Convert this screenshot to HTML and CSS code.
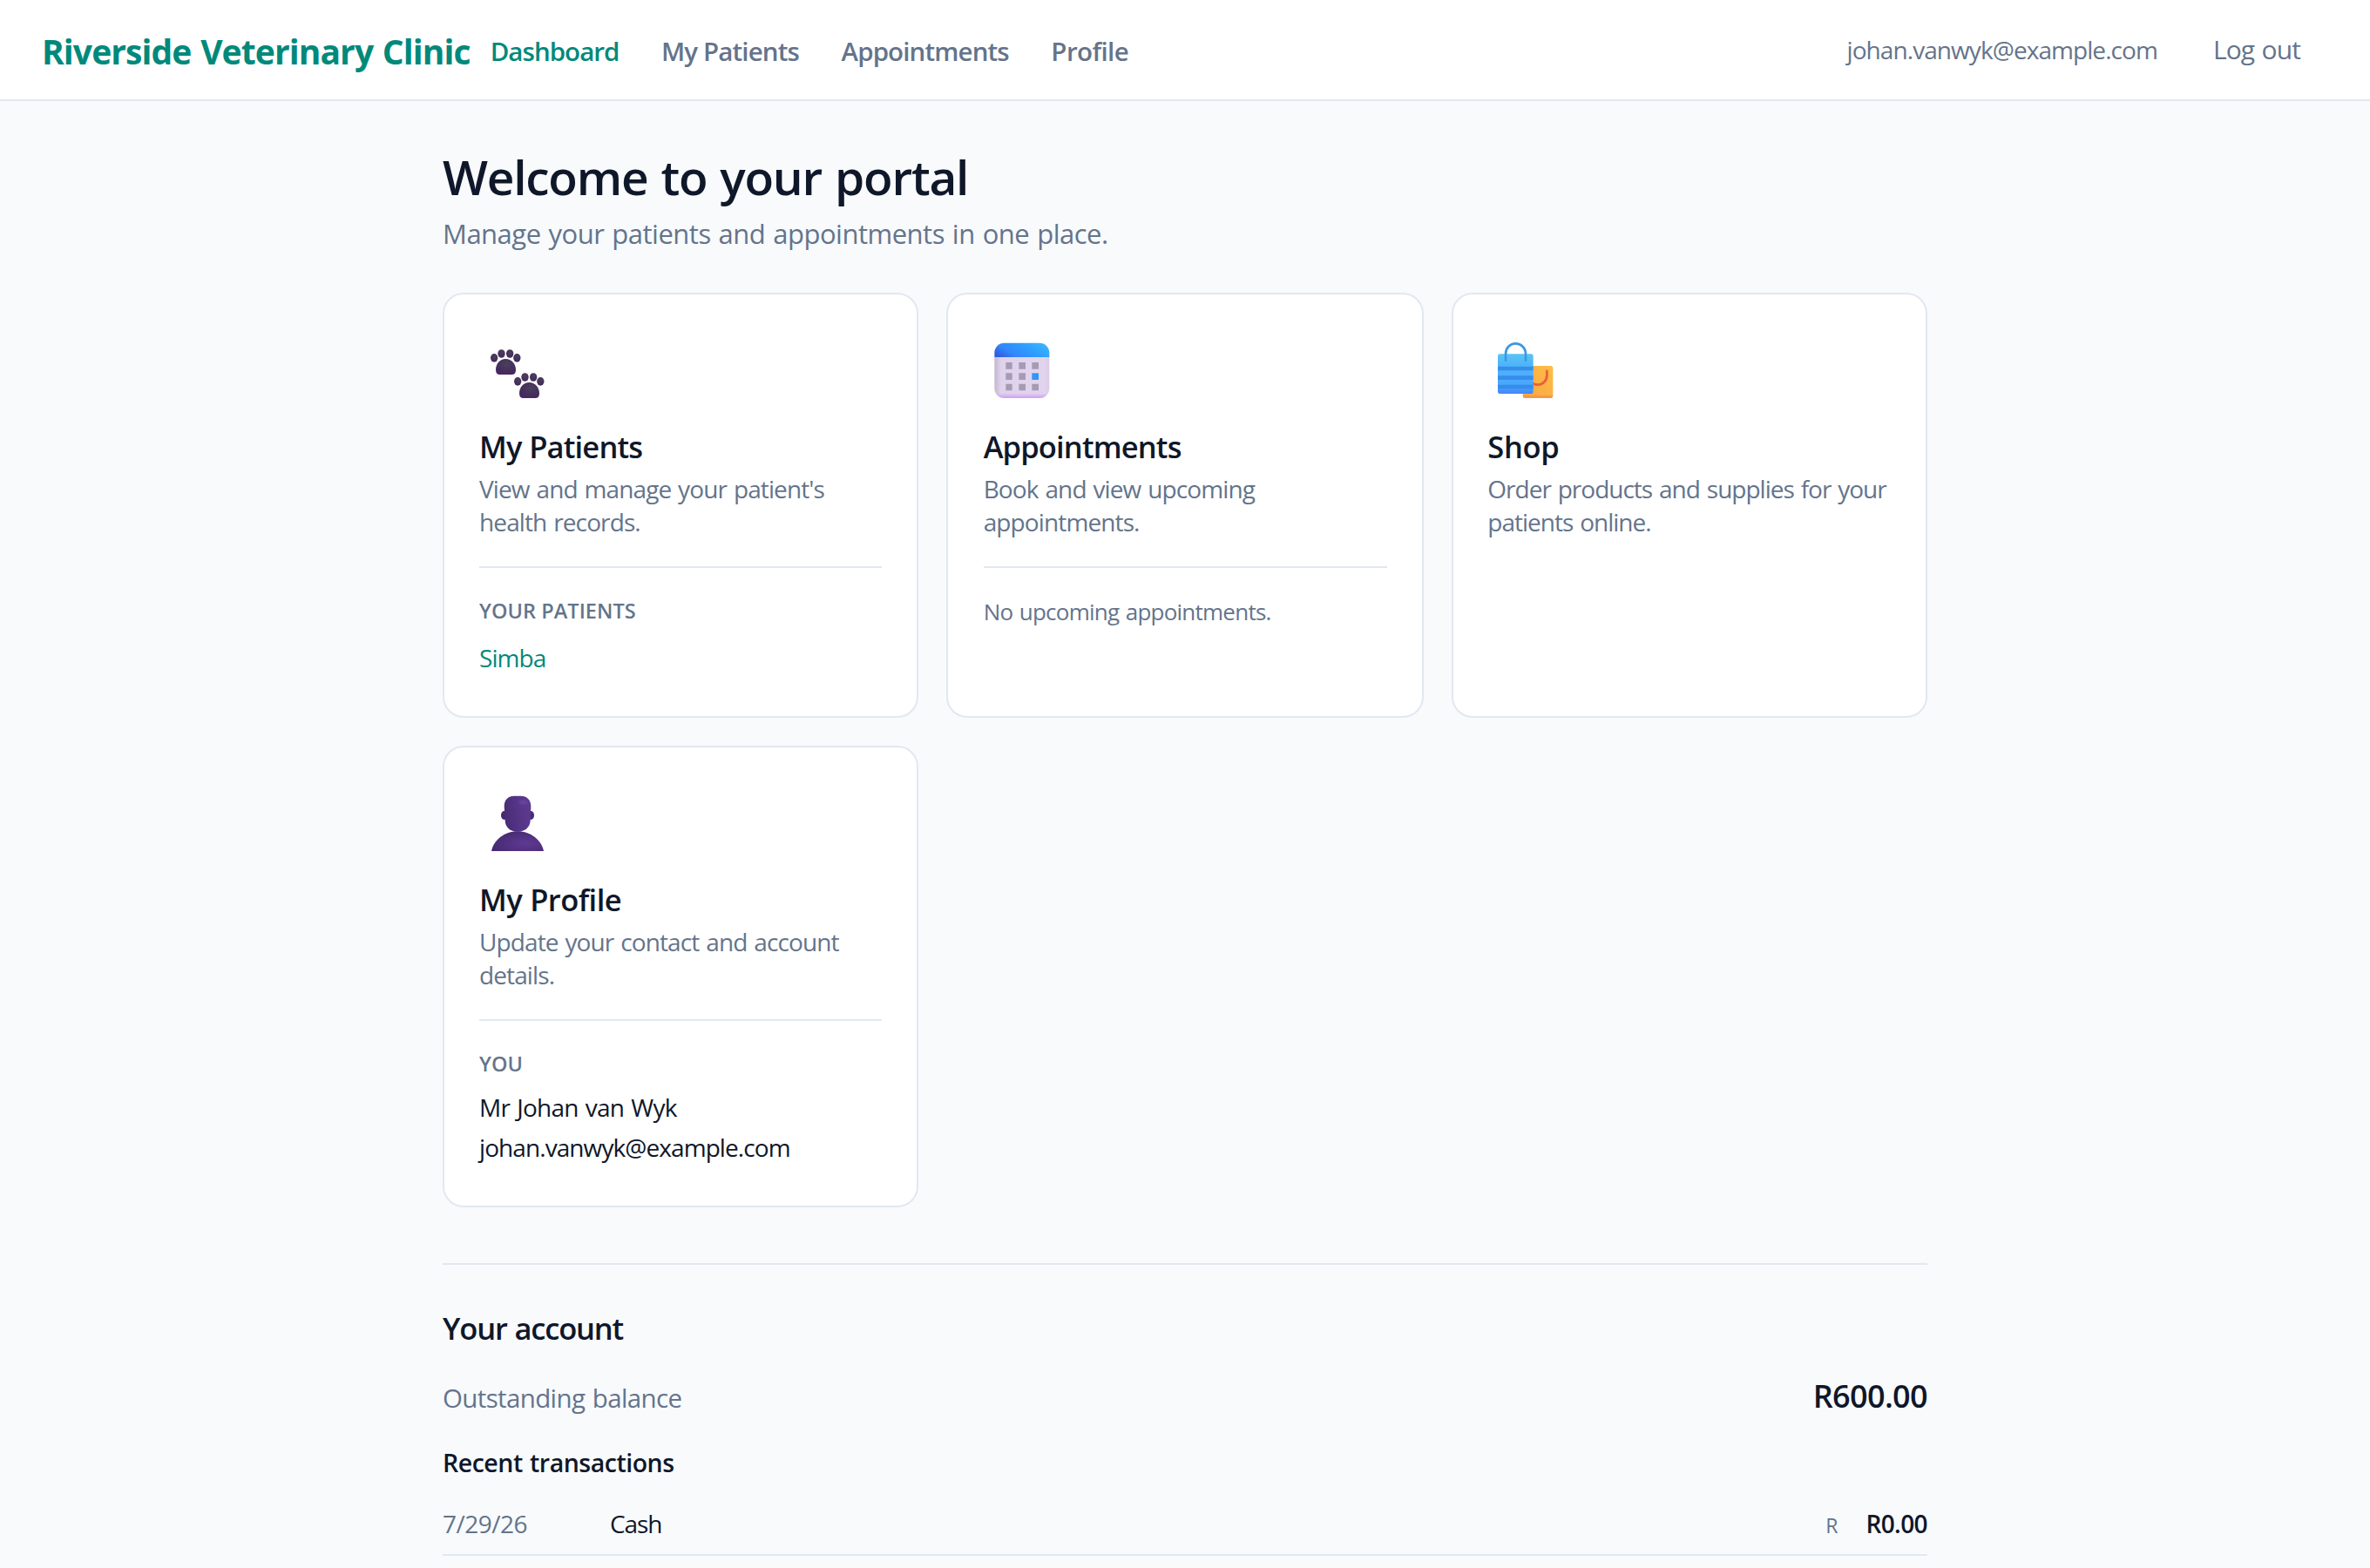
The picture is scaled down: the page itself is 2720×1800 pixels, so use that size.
FILE: index.html
```html
<!DOCTYPE html>
<html lang="en">
<head>
<meta charset="utf-8">
<title>Riverside Veterinary Clinic</title>
<link rel="stylesheet" href="styles.css">
</head>
<body>
<header class="topbar">
  <div class="topbar-left">
    <a class="brand">Riverside Veterinary Clinic</a>
    <nav class="nav">
      <a class="nav-link active">Dashboard</a>
      <a class="nav-link">My Patients</a>
      <a class="nav-link">Appointments</a>
      <a class="nav-link nav-profile">Profile</a>
    </nav>
  </div>
  <div class="topbar-right">
    <span class="user-email">johan.vanwyk@example.com</span>
    <a class="logout">Log out</a>
  </div>
</header>
<main class="page">
  <h1 class="page-title">Welcome to your portal</h1>
  <p class="page-subtitle">Manage your patients and appointments in one place.</p>
  <section class="cards">
    <article class="card card-patients">
      <svg class="card-icon" viewBox="30 24 252 252">
        <defs>
          <radialGradient id="paw" cx=".55" cy=".35" r=".75"><stop offset="0" stop-color="#4d3f5c"/><stop offset=".6" stop-color="#43305a"/><stop offset="1" stop-color="#47216b"/></radialGradient>
          <g id="print" fill="url(#paw)">
            <ellipse cx="81.500" cy="122.500" rx="12.500" ry="14.500"/>
            <ellipse cx="106.500" cy="108" rx="12.500" ry="14.500"/>
            <ellipse cx="135.500" cy="108" rx="12.500" ry="14.500"/>
            <ellipse cx="160" cy="122.500" rx="12.500" ry="14.500"/>
            <path d="M121 126c20 0 35 17 35 38 0 10-5 16-14 16h-41c-9 0-14-6-14-16 0-21 14-38 34-38z"/>
          </g>
        </defs>
        <use href="#print"/>
        <use href="#print" x="81" y="81"/>
      </svg>
      <h2 class="card-title">My Patients</h2>
      <p class="card-text">View and manage your patient's<br>health records.</p>
      <div class="card-extra">
        <h3 class="label">YOUR PATIENTS</h3>
        <a class="patient-link">Simba</a>
      </div>
    </article>
    <article class="card card-appointments">
      <svg class="card-icon" viewBox="26 24 252 252">
        <defs>
          <linearGradient id="calTop" x1="0" y1=".7" x2="1" y2=".3"><stop offset="0" stop-color="#2f5fe0"/><stop offset=".25" stop-color="#3186fa"/><stop offset=".7" stop-color="#2ea2ff"/><stop offset="1" stop-color="#3db4ff"/></linearGradient>
          <linearGradient id="calBody" x1="0" y1="0" x2="1" y2="0"><stop offset="0" stop-color="#c4b8cf"/><stop offset=".12" stop-color="#dfd2eb"/><stop offset=".9" stop-color="#e2d4ef"/><stop offset="1" stop-color="#d9cce6"/></linearGradient>
          <linearGradient id="calFoot" x1="0" y1="0" x2="0" y2="1"><stop offset=".88" stop-color="#cf9cf8" stop-opacity="0"/><stop offset="1" stop-color="#cf9cf8"/></linearGradient>
        </defs>
        <path d="M63 119h189v108a34 34 0 0 1-34 34H97a34 34 0 0 1-34-34z" fill="url(#calBody)"/>
        <path d="M63 119h189v108a34 34 0 0 1-34 34H97a34 34 0 0 1-34-34z" fill="url(#calFoot)"/>
        <path d="M63 120v-15a34 34 0 0 1 34-34h121a34 34 0 0 1 34 34v15z" fill="url(#calTop)"/>
        <path fill="#a59bb2" d="M102 138h22v23h-22zM147 138h23v23h-23zM192 138h23v23h-23zM102 175h22v23h-22zM147 175h23v23h-23zM102 212h22v23h-22zM147 212h23v23h-23zM192 212h23v23h-23z"/>
        <path fill="#2f97f5" d="M192 175h23v23h-23z"/>
      </svg>
      <h2 class="card-title">Appointments</h2>
      <p class="card-text">Book and view upcoming<br>appointments.</p>
      <div class="card-extra">
        <p class="empty">No upcoming appointments.</p>
      </div>
    </article>
    <article class="card card-shop">
      <svg class="card-icon" viewBox="22 24 252 252">
        <defs>
          <linearGradient id="bagFront" x1="0" y1="0" x2="0" y2="1"><stop offset="0" stop-color="#5cc4f2"/><stop offset=".25" stop-color="#4fb6fb"/><stop offset=".8" stop-color="#4aa5ff"/><stop offset="1" stop-color="#4585f8"/></linearGradient>
          <linearGradient id="bagBack" x1="1" y1="0" x2="0" y2="1"><stop offset="0" stop-color="#fdbf45"/><stop offset="1" stop-color="#fba344"/></linearGradient>
        </defs>
        <rect x="144" y="150" width="104" height="111" rx="8" fill="url(#bagBack)"/>
        <path d="M145 252h102q-1 9-8 9h-87q-7 0-7-9z" fill="#f29a48"/>
        <path d="M227 168v15c0 18-14 32-32 32-10 0-19-5-25-12" fill="none" stroke="#e95f3d" stroke-width="8.500" stroke-linecap="round"/>
        <rect x="58" y="109" width="122" height="137" rx="7" fill="url(#bagFront)"/>
        <path d="M58 152h122v14H58zM58 184h122v14H58zM58 215h122v14H58z" fill="#368de9"/>
        <path d="M85 131v-22c0-21 15-36 34-36s35 15 35 36v22" fill="none" stroke="#3b98e3" stroke-width="8" stroke-linecap="round"/>
      </svg>
      <h2 class="card-title">Shop</h2>
      <p class="card-text">Order products and supplies for your<br>patients online.</p>
    </article>
    <article class="card card-profile">
      <svg class="card-icon" viewBox="30 24 252 252">
        <defs>
          <linearGradient id="head" x1="0" y1=".5" x2="1" y2=".3"><stop offset="0" stop-color="#482c76"/><stop offset=".6" stop-color="#573689"/><stop offset="1" stop-color="#5d3a91"/></linearGradient>
          <radialGradient id="shine"><stop offset="0" stop-color="#6d46a3"/><stop offset="1" stop-color="#6d46a3" stop-opacity="0"/></radialGradient>
          <radialGradient id="torso" cx=".65" cy=".6" r=".65"><stop offset="0" stop-color="#5f3a94"/><stop offset="1" stop-color="#472a72"/></radialGradient>
        </defs>
        <ellipse cx="116" cy="138" rx="11" ry="15" fill="#45286e"/>
        <ellipse cx="208" cy="138" rx="11" ry="15" fill="#4a2b7a"/>
        <path d="M72 261c8-38 45-68 90-68s82 30 90 68z" fill="url(#torso)"/>
        <path d="M116 107c0-23 14-36 35-36h22c21 0 35 13 35 36l-2 49c-1 23-18 38-44 38s-42-15-43-38z" fill="url(#head)"/>
        <ellipse cx="181" cy="93" rx="22" ry="12" fill="url(#shine)"/>
      </svg>
      <h2 class="card-title">My Profile</h2>
      <p class="card-text">Update your contact and account<br>details.</p>
      <div class="card-extra">
        <h3 class="label">YOU</h3>
        <ul class="contact">
          <li class="contact-name">Mr Johan van Wyk</li>
          <li class="contact-email">johan.vanwyk@example.com</li>
        </ul>
      </div>
    </article>
  </section>
  <section class="account">
    <h2 class="section-title">Your account</h2>
    <div class="balance">
      <span class="balance-label">Outstanding balance</span>
      <span class="balance-amount">R600.00</span>
    </div>
    <h3 class="list-title">Recent transactions</h3>
    <div class="transaction">
      <span class="date">7/29/26</span>
      <span class="method">Cash</span>
      <span class="currency">R</span>
      <span class="amount">R0.00</span>
    </div>
  </section>
</main>
</body>
</html>
```

FILE: styles.css
```css
* { box-sizing: border-box; margin: 0; padding: 0; }
body {
  min-height: 1800px;
  background: #f8fafc;
  color: #0f172a;
  font-family: "Open Sans", "Noto Sans", sans-serif;
  font-size: 28px;
  line-height: 40px;
}

/* Top bar */
.topbar {
  display: flex;
  justify-content: space-between;
  align-items: center;
  height: 116px;
  padding: 0 80px 0 48px;
  background: #fff;
  border-bottom: 2px solid #e2e8f0;
}
.topbar-left { display: flex; align-items: center; gap: 23px; padding-top: 3px; }
.topbar-right { display: flex; align-items: center; gap: 64px; color: #64748b; }
.brand { color: #00897b; font-size: 39px; font-weight: 700; letter-spacing: -.9px; word-spacing: 1.4px; }
.nav { display: flex; gap: 48.5px; }
.nav-link { color: #64748b; font-size: 29.5px; font-weight: 600; letter-spacing: -.87px; }
.nav-profile { letter-spacing: -.6px; }
.nav-link.active { color: #00897b; letter-spacing: -.95px; }
.user-email { letter-spacing: -.93px; }
.logout { font-size: 30px; letter-spacing: -.9px; word-spacing: 1.4px; }

/* Page heading */
.page { width: 1704px; margin: 0 auto; padding-top: 55px; }
.page-title { font-size: 55px; line-height: 64px; font-weight: 600; letter-spacing: -1.24px; word-spacing: 2px; }
.page-subtitle { margin-top: 9px; color: #64748b; font-size: 31px; line-height: 48px; letter-spacing: -.5px; word-spacing: 1.4px; }

/* Cards */
.cards { display: grid; grid-template-columns: 546px 548px 546px; gap: 32px; margin-top: 44px; }
.card { padding: 40px; background: #fff; border: 2px solid #e2e8f0; border-radius: 24px; }
.card-appointments { padding-left: 40.67px; }
.card-shop { padding-left: 39.33px; }
.card-icon { display: block; width: 84px; height: 84px; }
.card-title { margin-top: 27px; font-size: 34.5px; line-height: 48px; font-weight: 600; letter-spacing: -.85px; word-spacing: .6px; }
.card-shop .card-title { letter-spacing: -.31px; }
.card-profile .card-title { letter-spacing: -.55px; }
.card-text { margin-top: 5px; color: #64748b; line-height: 38px; letter-spacing: -.88px; word-spacing: 1.4px; white-space: nowrap; }
.card-shop .card-text { letter-spacing: -1px; word-spacing: 1.6px; }
.card-extra { margin-top: 32px; padding-top: 33px; border-top: 2px solid #e2e8f0; }
.label { color: #64748b; font-size: 23.5px; line-height: 32px; font-weight: 600; letter-spacing: .05px; }
.patient-link { display: block; margin: 18px 0 7px; color: #00897b; letter-spacing: -.95px; }
.empty { margin-top: -1px; color: #64748b; font-size: 26px; line-height: 36px; letter-spacing: -.76px; word-spacing: 1.4px; }
.contact { margin: 11px 0 4px; list-style: none; line-height: 46px; }
.contact-name { letter-spacing: -.72px; word-spacing: 1.4px; }
.contact-email { letter-spacing: -.92px; }

/* Account */
.account { margin-top: 64px; padding-top: 49px; border-top: 2px solid #e2e8f0; }
.section-title { font-size: 34.5px; line-height: 48px; font-weight: 600; letter-spacing: -1.17px; word-spacing: 1px; }
.balance { display: flex; justify-content: space-between; align-items: baseline; margin-top: 28px; line-height: 52px; }
.balance-label { color: #64748b; font-size: 29.5px; letter-spacing: -.63px; word-spacing: 1.4px; }
.balance-amount { font-size: 36px; font-weight: 600; letter-spacing: -.65px; }
.list-title { margin-top: 28px; font-size: 28.5px; line-height: 40px; font-weight: 600; letter-spacing: -.48px; word-spacing: 1.4px; }
.transaction { display: flex; align-items: baseline; margin-top: 30px; padding-bottom: 13px; border-bottom: 2px solid #e2e8f0; }
.date { width: 192px; color: #64748b; letter-spacing: -.51px; }
.method { flex: 1; letter-spacing: -1.08px; }
.currency { margin-right: 32px; color: #64748b; font-size: 23px; }
.amount { font-weight: 600; letter-spacing: -.6px; }
```
